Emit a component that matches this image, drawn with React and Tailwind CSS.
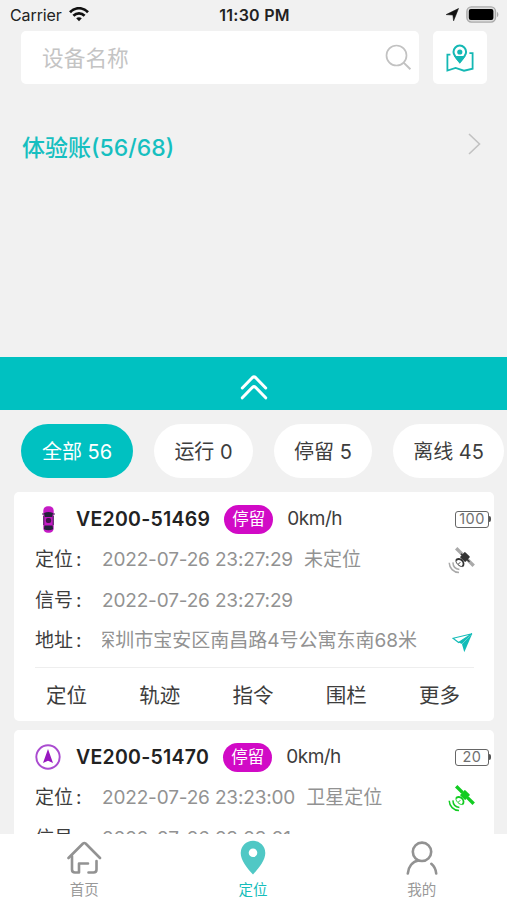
const filters = [
  { label: '全部 56', width: 'w-[112px]', active: true },
  { label: '运行 0', width: 'w-[99px]' },
  { label: '停留 5', width: 'w-[98px]' },
  { label: '离线 45', width: 'w-[111px]' },
];

const actions = ['定位', '轨迹', '指令', '围栏', '更多'];

const devices = [
  {
    name: 'VE200-51469',
    icon: 'car',
    status: '停留',
    speed: '0km/h',
    battery: 100,
    located: '2022-07-26 23:27:29',
    fix: '未定位',
    signal: '2022-07-26 23:27:29',
    address: '深圳市宝安区南昌路4号公寓东南68米',
  },
  {
    name: 'VE200-51470',
    icon: 'arrow',
    status: '停留',
    speed: '0km/h',
    battery: 20,
    located: '2022-07-26 23:23:00',
    fix: '卫星定位',
    signal: '2022-07-26 23:23:01',
    address: '深圳市宝安区南昌路4号公寓东南68米',
    online: true,
  },
];

function StatusBar() {
  return (
    <div className="grid h-[31px] shrink-0 grid-cols-3 items-center pb-[2px] pl-[10px] pr-[8px] text-[16px] text-[#222]">
      <div className="flex items-center gap-[7px]">
        <span className="tracking-[-0.1px]">Carrier</span>
        <svg width="20" height="15" viewBox="0 0 20 15" fill="none" stroke="#111" strokeWidth="2.7">
          <path d="M1 5.2C6-.1 14-.1 19 5.2" />
          <path d="M4.4 8.8C7.6 5.6 12.4 5.6 15.6 8.8" />
          <path d="M7.2 11.2C8.8 9.8 11.2 9.8 12.8 11.2L10 14.2Z" fill="#111" stroke="none" />
        </svg>
      </div>
      <div className="text-center font-semibold tracking-[0.25px] whitespace-nowrap">11:30 PM</div>
      <div className="flex items-center justify-end gap-[7px]">
        <svg width="13" height="13" viewBox="0 0 13 13" fill="#111">
          <path d="M12.5.5 7.6 12.8 6.9 7 .2 6.600Z" stroke="#111" strokeWidth=".6" />
        </svg>
        <svg width="33" height="17" viewBox="0 0 33 17">
          <rect x=".9" y=".9" width="28.600" height="15.2" rx="4.5" fill="#ddd" stroke="#aaa" strokeWidth="1.4" />
          <rect x="2.800" y="3" width="24.600" height="11" rx="2" fill="#000" />
          <path d="M31 6v5c1.800-.6 1.800-4.400 0-5Z" fill="#aaa" />
        </svg>
      </div>
    </div>
  );
}

function SearchRow() {
  return (
    <div className="flex h-[53px] shrink-0 gap-[14px] pl-[21px] pr-5">
      <div className="flex flex-1 items-center justify-between rounded-[5px] bg-white pl-[21px] pr-[7px]">
        <span className="pt-px text-[21.7px] text-[#c4c4c4]">设备名称</span>
        <svg width="27" height="27" viewBox="0 0 27 27" fill="none" stroke="#c2c2c2" strokeWidth="1.7">
          <circle cx="11.5" cy="11.5" r="10" />
          <path d="m18.6 18.6 6.8 6.6" strokeWidth="2" />
        </svg>
      </div>
      <div className="flex w-[54px] items-center justify-center rounded-[5px] bg-white">
        <svg width="28" height="28" viewBox="0 0 28 28" fill="none" stroke="#14b8b4" strokeWidth="1.8">
          <path d="M4.400 10.600H1.400V26.600l8.200-2.600 8.400 2.700 8.600-2V9.200h-3.200" />
          <path d="M13.800 17.800C9.800 13.400 7.500 11 7.500 7.900a6.300 6.300 0 0 1 12.600 0c0 3.100-2.300 5.500-6.300 9.900Z" strokeWidth="2" />
          <path d="m9.800 13 4 5.200 4-5.200Z" fill="#14b8b4" />
          <circle cx="13.800" cy="8" r="2.600" fill="#14b8b4" stroke="none" />
        </svg>
      </div>
    </div>
  );
}

function CarIcon() {
  return (
    <svg width="13" height="27" viewBox="0 0 13 27">
      <rect x="1.3" y=".3" width="10.4" height="26.4" rx="4.5" fill="#c51bc5" />
      <path d="M2 7q4.500-2.200 9 0l-.8 4H2.800Z" fill="#23233a" />
      <path d="M2.400 19.500h8.200l.5 3.800q-4.600 1.800-9.200 0Z" fill="#23233a" />
      <rect x="3.800" y="12" width="5.400" height="5" rx="2" fill="#41154d" />
      <path d="M0 8h2M11 8h2M1.800 10v9M11.200 10v9" stroke="#3d2650" />
    </svg>
  );
}

function ArrowIcon() {
  return (
    <svg width="26" height="26" viewBox="0 0 26 26">
      <circle cx="13" cy="13" r="11.700" fill="none" stroke="#aa4bd0" strokeWidth="1.900" />
      <path d="M13 5 18 19 13 16.800 8 19Z" fill="#9818c0" />
    </svg>
  );
}

function BatteryIcon({ level }) {
  return (
    <div className="flex items-center">
      <div className="flex h-[17px] w-[34px] items-center justify-center rounded-[3px] border border-[#666] text-[14.5px] leading-none tracking-[0.4px] text-[#707070]">
        {level}
      </div>
      <div className="h-[6px] w-[2px] rounded-r bg-[#555]" />
    </div>
  );
}

function SatelliteIcon({ online }) {
  const body = online ? '#12cc22' : '#333';
  const panel = online ? '#12cc22' : '#aaa';
  return (
    <svg width="28" height="27" viewBox="0 0 28 27" fill="none">
      <path d="m8.200 1.200 6.200 6.200M19.500 12.600l6.200 6.200" stroke={panel} strokeWidth="3.400" />
      <path d="m13 6.700 8.500 8" stroke={body} strokeWidth="1.400" />
      <rect x="-3.700" y="-3.700" width="7.400" height="7.400" rx="1" fill={body} transform="translate(17 10) rotate(43)" />
      <path d="M8 13.600c1-2.400 4.400-1.800 6.100-.1 1.800 1.900 2 4.600.2 5.900" stroke={body} strokeWidth="1.800" />
      <path d="M8 13.600c-.5 2.200 3.800 6.600 6.300 5.800M10.300 17.200l2-2" stroke={body} strokeWidth="1" />
      <path d="M4.900 15.400c.2 4.100 2.700 6.700 6.500 7" stroke={panel} strokeWidth="1.500" />
      <path d="M1.200 15.800c.2 5.400 4.300 9.500 9.800 9.700" stroke={panel} strokeWidth="1.500" />
    </svg>
  );
}

function NavigateIcon() {
  return (
    <svg width="21" height="20" viewBox="0 0 21 20">
      <path d="M20.300.4 12.300 19.200 10 11.200Z" fill="#12bcb8" />
      <path d="M20 .7 1 5.300l5.600 4.200Z" fill="#fff" stroke="#12bcb8" strokeWidth="1.100" />
      <path d="M20 .7 6.600 9.500 10 11" fill="#12bcb8" />
    </svg>
  );
}

function InfoRow({ label, children }) {
  return (
    <div className="flex h-[40.5px] items-center text-[19px]">
      <span className="w-[67px] shrink-0 whitespace-nowrap text-[#3d3d3d]">
        {label}
        <span className="pl-[3px]">:</span>
      </span>
      {children}
    </div>
  );
}

function DeviceCard({ device }) {
  return (
    <div className="h-[229px] shrink-0 rounded-[5px] bg-white pl-[21px]">
      <div className="flex h-[54px] items-center pr-[3px]">
        <div className="flex w-[26px] justify-center">
          {device.icon === 'car' ? <CarIcon /> : <ArrowIcon />}
        </div>
        <span className="ml-[15px] pt-px text-[19.5px] font-semibold tracking-[0.27px] text-[#222]">{device.name}</span>
        <span className="ml-[14px] flex h-[29px] w-[49px] items-center justify-center rounded-full bg-[#d10ac6] text-[16.5px] text-white">
          {device.status}
        </span>
        <span className="ml-[14px] flex-1 pt-px text-[19px] tracking-[-0.5px] text-[#3d3d3d]">{device.speed}</span>
        <BatteryIcon level={device.battery} />
      </div>
      <div className="-mt-[6px]">
        <InfoRow label="定位">
          <span className="tracking-[-0.16px] text-[#929292]">{device.located}</span>
          <span className="ml-[11px] flex-1 text-[#929292]">{device.fix}</span>
          <span className="pr-[18px]">
            <SatelliteIcon online={device.online} />
          </span>
        </InfoRow>
        <InfoRow label="信号">
          <span className="tracking-[-0.16px] text-[#929292]">{device.signal}</span>
        </InfoRow>
        <InfoRow label="地址">
          <div className="flex w-[315px] justify-end overflow-hidden whitespace-nowrap text-[#929292]">
            <span>{device.address}</span>
          </div>
          <span className="ml-[35px] pt-[3px]">
            <NavigateIcon />
          </span>
        </InfoRow>
      </div>
      <div className="mr-5 mt-[5px] h-px bg-[#eee]" />
      <div className="-ml-[15px] mr-[8px] flex h-[54px] items-center pt-[3px] text-[20.5px] text-[#3d3d3d]">
        {actions.map((action) => (
          <span key={action} className="flex-1 text-center">{action}</span>
        ))}
      </div>
    </div>
  );
}

function TabBar() {
  return (
    <div className="grid h-[66px] shrink-0 grid-cols-3 bg-white pr-px text-[14.5px] text-[#999]">
      <div className="flex flex-col items-center pt-[7px]">
        <svg width="36" height="34" viewBox="0 0 36 34" fill="none" stroke="#929292" strokeWidth="2.600" strokeLinecap="round" strokeLinejoin="round">
          <path d="M2.500 17 17 2.500q1.300-1 2.600 0L34 17" />
          <path d="M6 15v13.500q0 3 3 3h4V22.500h9M30.500 20v8.500q0 3-3 3h-5" />
        </svg>
        <span className="mt-[4px] leading-[22px]">首页</span>
      </div>
      <div className="flex flex-col items-center pt-[6px] text-[#15bdba]">
        <svg width="26" height="35" viewBox="0 0 26 35" fill="#50c8c5">
          <path fillRule="evenodd" d="M13 .7A12.300 12.300 0 0 0 .7 13c0 7.400 6.300 14.900 12.300 21.500C19 27.900 25.300 20.400 25.300 13A12.300 12.300 0 0 0 13 .7Zm0 7.800a4.300 4.300 0 1 1 0 8.600 4.300 4.300 0 0 1 0-8.600Z" />
        </svg>
        <span className="mt-[4px] leading-[22px]">定位</span>
      </div>
      <div className="flex flex-col items-center pt-[7px]">
        <svg width="32" height="34" viewBox="0 0 32 34" fill="none" stroke="#929292" strokeWidth="2.600" strokeLinecap="round">
          <circle cx="16" cy="10.800" r="9.200" />
          <path d="M1.800 32.500C2.300 25.500 6.500 20.400 12.500 19.500M25.300 22.800q4.400 3.700 4.900 9.700" />
        </svg>
        <span className="mt-[4px] leading-[22px]">我的</span>
      </div>
    </div>
  );
}

export default function App() {
  return (
    <div className="flex h-[900px] w-[507px] flex-col overflow-hidden bg-[#f1f1f1] font-['Inter','Noto_Sans_CJK_SC',sans-serif]">
      <StatusBar />
      <SearchRow />
      <div className="flex h-[273px] shrink-0 items-start justify-between pl-[22px] pr-[26px] pt-[46px]">
        <span className="pt-px text-[23px] font-medium leading-[34px] text-[#16bfc0]">体验账(56/68)</span>
        <svg className="mt-[3px]" width="13" height="22" viewBox="0 0 13 22" fill="none" stroke="#c2c2c2" strokeWidth="1.600">
          <path d="m1 1 10.500 10L1 21" />
        </svg>
      </div>
      <div className="flex h-[53px] shrink-0 items-center justify-center bg-[#00c1c1] pt-[7px]">
        <svg width="28" height="25" viewBox="0 0 28 25" fill="none" stroke="#fff" strokeWidth="3" strokeLinecap="round" strokeLinejoin="round">
          <path d="M2.300 13 12.500 2.500q1.500-1.300 3 0L25.700 13" />
          <path d="M2.300 22.800 12.500 12.300q1.500-1.300 3 0L25.700 22.800" />
        </svg>
      </div>
      <div className="flex h-[82px] shrink-0 items-center gap-[21px] overflow-hidden pl-[21px]">
        {filters.map((filter) => (
          <div
            key={filter.label}
            className={`flex h-[54px] shrink-0 items-center justify-center rounded-full pt-[2px] text-[20px] ${filter.width} ${
              filter.active ? 'bg-[#00c1c1] text-white' : 'bg-white text-[#3d3d3d]'
            }`}
          >
            {filter.label}
          </div>
        ))}
      </div>
      <div className="flex min-h-0 flex-1 flex-col gap-[9px] overflow-hidden pl-[14px] pr-[13px]">
        {devices.map((device) => (
          <DeviceCard key={device.name} device={device} />
        ))}
      </div>
      <TabBar />
    </div>
  );
}
